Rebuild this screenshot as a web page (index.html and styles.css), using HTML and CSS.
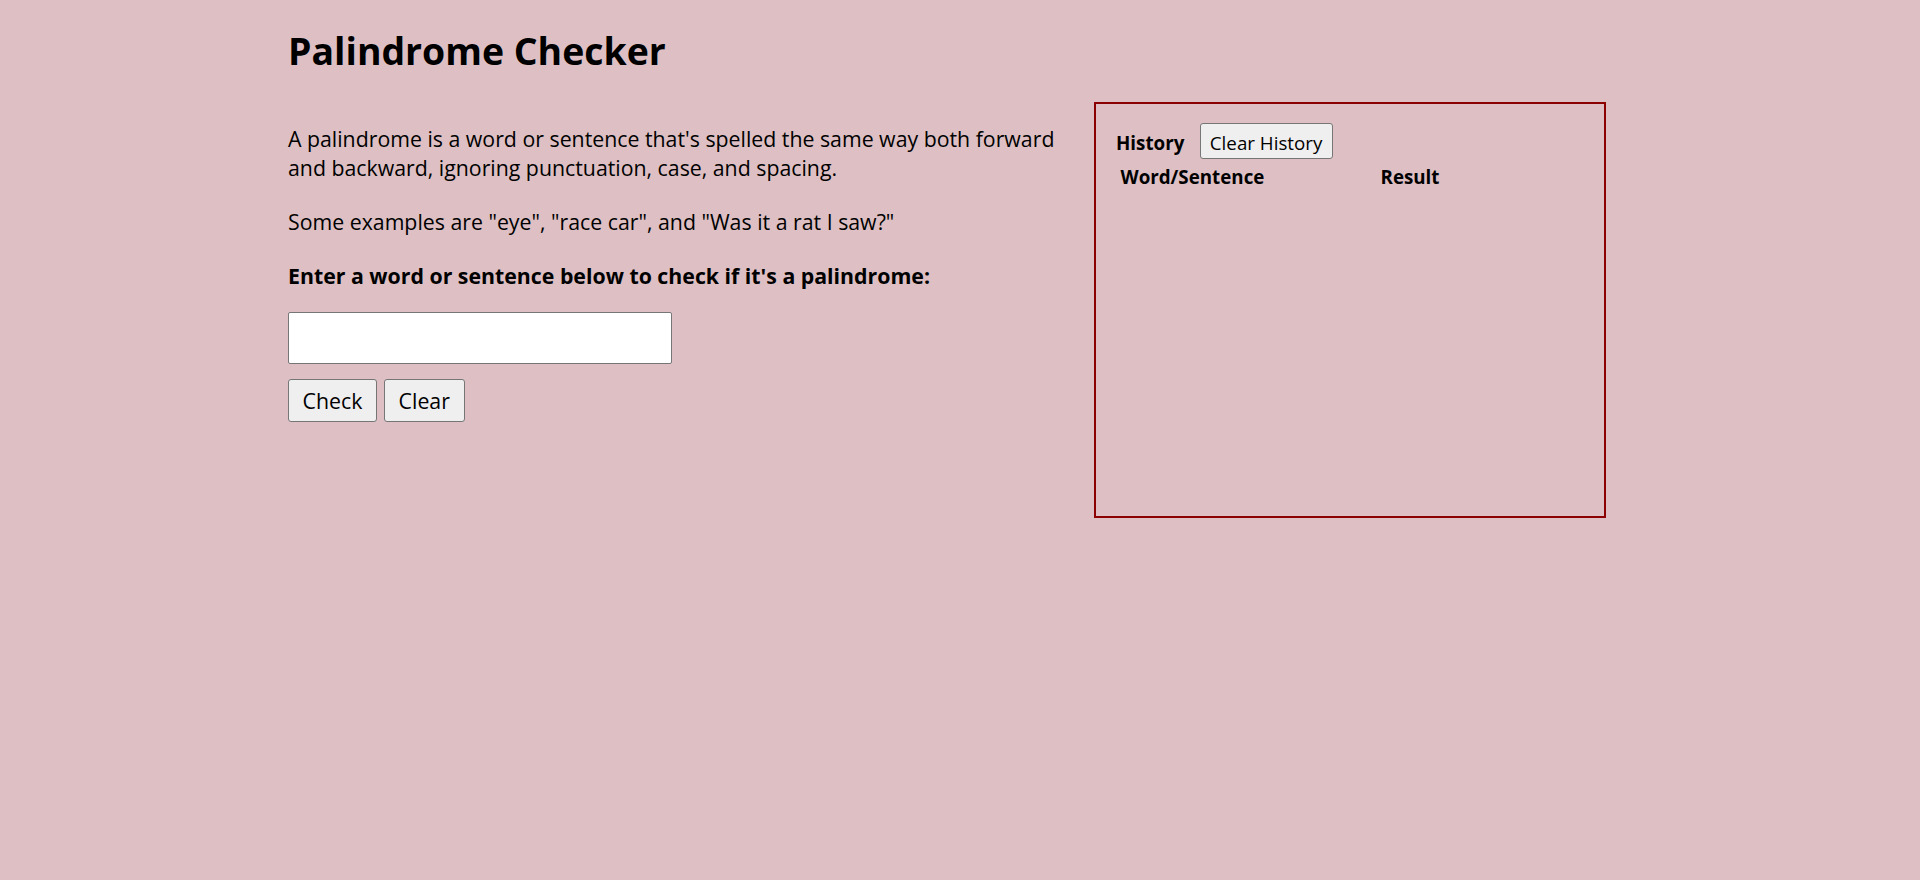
FILE: index.html
```html
<!DOCTYPE html>
<html lang="en">
<head>
<meta charset="utf-8">
<title>Palindrome Checker</title>
<link rel="stylesheet" href="styles.css">
</head>
<body>
<main class="page">
  <h1 class="title">Palindrome Checker</h1>
  <div class="layout">
    <section class="checker">
      <p class="text">A palindrome is a word or sentence that's spelled the same way both forward and backward, ignoring punctuation, case, and spacing.</p>
      <p class="text">Some examples are "eye", "race car", and "Was it a rat I saw?"</p>
      <p class="text text-bold">Enter a word or sentence below to check if it's a palindrome:</p>
      <input class="word-input" type="text" aria-label="Word or sentence">
      <div class="actions">
        <button class="btn btn-lg" type="button">Check</button>
        <button class="btn btn-lg" type="button">Clear</button>
      </div>
    </section>
    <aside class="history">
      <div class="history-head">
        <span class="history-label">History</span>
        <button class="btn btn-sm" type="button">Clear History</button>
      </div>
      <table class="history-table">
        <thead>
          <tr><th class="col-word">Word/Sentence</th><th class="col-result">Result</th></tr>
        </thead>
        <tbody></tbody>
      </table>
    </aside>
  </div>
</main>
</body>
</html>
```

FILE: styles.css
```css
html, body {
  margin: 0;
  padding: 0;
}

body {
  background: #dec0c4;
  color: #000;
  font-family: "Open Sans", "Noto Sans", sans-serif;
}

.page {
  padding-left: 288px;
}

.title {
  margin: 25.9px 0 26.1px;
  font-size: 37.4px;
  line-height: 50px;
  font-weight: 700;
}

.layout {
  display: flex;
  align-items: flex-start;
  gap: 26px;
}

.checker {
  width: 780px;
  padding-top: 23.5px;
}

.text {
  margin: 0 0 25.7px;
  font-size: 21.3px;
  line-height: 28.4px;
}

.text-bold {
  font-weight: 700;
  margin-bottom: 21.2px;
}

.word-input {
  display: block;
  box-sizing: border-box;
  width: 384px;
  height: 52px;
  margin: 0;
  border: 1px solid #767676;
  border-radius: 2px;
  background: #fff;
  font: inherit;
}

.actions {
  display: flex;
  gap: 7px;
  margin-top: 15.2px;
}

.btn {
  box-sizing: border-box;
  margin: 0;
  border: 1px solid #767676;
  border-radius: 3px;
  background: #efefef;
  color: #000;
  font-family: inherit;
}

.btn-lg {
  height: 43.3px;
  padding: 0 13.6px;
  font-size: 21.3px;
}

.history {
  box-sizing: border-box;
  width: 512px;
  height: 416px;
  padding: 19.3px 20px 0;
  border: 2px solid #8b0000;
}

.history-head {
  display: flex;
  align-items: baseline;
  gap: 15.3px;
}

.history-label {
  font-size: 18.75px;
  font-weight: 700;
}

.btn-sm {
  height: 36px;
  padding: 5.9px 9.2px 3.1px;
  font-size: 18.75px;
  line-height: 25px;
}

.history-table {
  margin: 3px 0 0 1.5px;
  border-spacing: 2px;
}

.history-table th {
  padding: 1px;
  text-align: left;
  font-size: 18.75px;
  line-height: 24.8px;
  font-weight: 700;
}

.col-word {
  width: 256px;
}
```
